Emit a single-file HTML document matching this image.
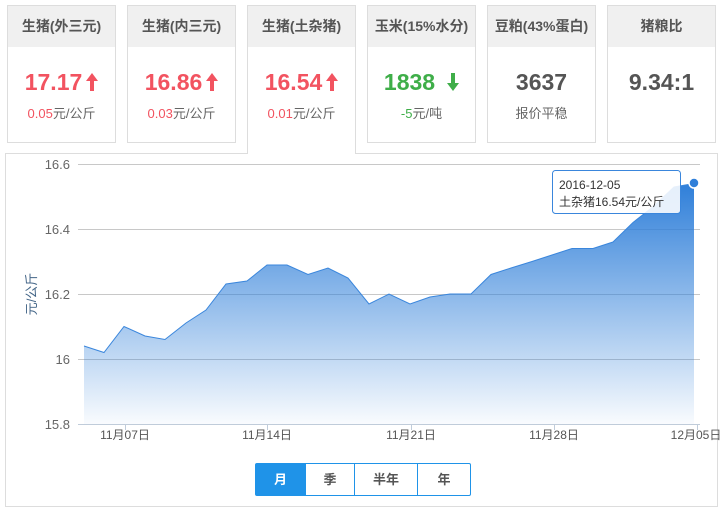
<!DOCTYPE html>
<html><head><meta charset="utf-8"><style>
*{margin:0;padding:0;box-sizing:border-box}
body{width:728px;height:513px;background:#fff;font-family:"Liberation Sans","Noto Sans CJK SC",sans-serif;position:relative;overflow:hidden}
.card{position:absolute;top:5px;width:109px;height:138px;border:1px solid #ddd;background:#fff;text-align:center}
.card .h{height:41px;background:#f0f0f0;line-height:41px;font-size:14px;font-weight:bold;color:#555}
.card .v{margin-top:22px;font-size:23px;font-weight:bold;line-height:26px}
.card .v svg{vertical-align:-1px;margin-left:4px}
.card .s{margin-top:8px;font-size:13px;color:#666}
.red{color:#f25360}.green{color:#3fae49}.gray{color:#555}
.sel{height:149px;border-bottom:none;z-index:2}
.panel{position:absolute;left:5px;top:153px;width:713px;height:354px;border:1px solid #ddd}
.btns{position:absolute;left:255px;top:463px;height:33px;display:flex;border:1px solid #1f93e8;border-radius:2px}
.btns div{height:31px;line-height:31px;text-align:center;font-size:13px;font-weight:bold;color:#555;border-left:1px solid #1f93e8}
.btns div:first-child{border-left:none;background:#1f93e8;color:#fff}
</style></head><body>
<div class="card" style="left:7px"><div class="h">生猪(外三元)</div><div class="v red">17.17<svg width="12" height="18" viewBox="0 0 12 18"><path d="M6,0 L12,8 L8,8 L8,18 L4,18 L4,8 L0,8Z" fill="#f25360"/></svg></div><div class="s"><span class="red">0.05</span>元/公斤</div></div>
<div class="card" style="left:127px"><div class="h">生猪(内三元)</div><div class="v red">16.86<svg width="12" height="18" viewBox="0 0 12 18"><path d="M6,0 L12,8 L8,8 L8,18 L4,18 L4,8 L0,8Z" fill="#f25360"/></svg></div><div class="s"><span class="red">0.03</span>元/公斤</div></div>
<div class="card sel" style="left:247px"><div class="h">生猪(土杂猪)</div><div class="v red">16.54<svg width="12" height="18" viewBox="0 0 12 18"><path d="M6,0 L12,8 L8,8 L8,18 L4,18 L4,8 L0,8Z" fill="#f25360"/></svg></div><div class="s"><span class="red">0.01</span>元/公斤</div></div>
<div class="card" style="left:367px"><div class="h">玉米(15%水分)</div><div class="v green">1838<svg style="margin-left:12px" width="12" height="18" viewBox="0 0 12 18"><path d="M6,18 L12,10 L8,10 L8,0 L4,0 L4,10 L0,10Z" fill="#3fae49"/></svg></div><div class="s"><span class="green">-5</span>元/吨</div></div>
<div class="card" style="left:487px"><div class="h">豆粕(43%蛋白)</div><div class="v gray">3637</div><div class="s">报价平稳</div></div>
<div class="card" style="left:607px"><div class="h">猪粮比</div><div class="v gray">9.34:1</div></div>
<div class="panel"></div>
<svg style="position:absolute;left:0;top:0" width="728" height="513">
<defs><linearGradient id="g" x1="0" y1="0" x2="0" y2="1"><stop offset="0" stop-color="#2f7fd9"/><stop offset="1" stop-color="#2f7fd9" stop-opacity="0.03"/></linearGradient></defs>
<g stroke="#c8c8c8" stroke-width="1">
<line x1="78" y1="164.5" x2="700" y2="164.5"/><line x1="78" y1="229.5" x2="700" y2="229.5"/><line x1="78" y1="294.5" x2="700" y2="294.5"/><line x1="78" y1="359.5" x2="700" y2="359.5"/></g>
<path d="M84,346 L104,352.5 L124,326.5 L145,336 L165,339.5 L186,323 L206,310 L226,284 L247,281 L267,265 L287,265 L308,274.5 L328,268 L348,278 L369,304 L389,294 L410,304 L430,297 L450,294 L471,294 L491,274.5 L511,268 L532,261.5 L552,255 L572,248.5 L593,248.5 L613,242 L633,222.5 L654,206 L674,187 L694,183.5 L694,424 L84,424Z" fill="url(#g)"/>
<path d="M84,346 L104,352.5 L124,326.5 L145,336 L165,339.5 L186,323 L206,310 L226,284 L247,281 L267,265 L287,265 L308,274.5 L328,268 L348,278 L369,304 L389,294 L410,304 L430,297 L450,294 L471,294 L491,274.5 L511,268 L532,261.5 L552,255 L572,248.5 L593,248.5 L613,242 L633,222.5 L654,206 L674,187 L694,183.5" fill="none" stroke="#3a86dc" stroke-width="1"/>
<line x1="78" y1="424.5" x2="700" y2="424.5" stroke="#c0ccda"/>
<g stroke="#c0ccda"><line x1="125.5" y1="424" x2="125.5" y2="430"/><line x1="267.5" y1="424" x2="267.5" y2="430"/><line x1="411.5" y1="424" x2="411.5" y2="430"/><line x1="554.5" y1="424" x2="554.5" y2="430"/><line x1="697.5" y1="424" x2="697.5" y2="430"/></g>
<circle cx="694" cy="183" r="5" fill="#2f7fd9" stroke="#fff" stroke-width="1.5"/>
<g font-size="13" fill="#666" text-anchor="end"><text x="70" y="169">16.6</text><text x="70" y="234">16.4</text><text x="70" y="299">16.2</text><text x="70" y="364">16</text><text x="70" y="429">15.8</text></g>
<g font-size="12" fill="#555" text-anchor="middle"><text x="125" y="439">11月07日</text><text x="267" y="439">11月14日</text><text x="411" y="439">11月21日</text><text x="554" y="439">11月28日</text><text x="696" y="439">12月05日</text></g>
<text transform="translate(36,294) rotate(-90)" font-size="13" fill="#446688" text-anchor="middle">元/公斤</text>
<rect x="552.5" y="170.5" width="128" height="43" rx="3" fill="#fff" fill-opacity="0.88" stroke="#3a86dc"/>
<text x="559" y="189" font-size="12" fill="#333">2016-12-05</text>
<text x="559" y="206" font-size="12" fill="#333">土杂猪16.54元/公斤</text>
</svg>
<div class="btns"><div style="width:49px">月</div><div style="width:49px">季</div><div style="width:63px">半年</div><div style="width:53px">年</div></div>
</body></html>
